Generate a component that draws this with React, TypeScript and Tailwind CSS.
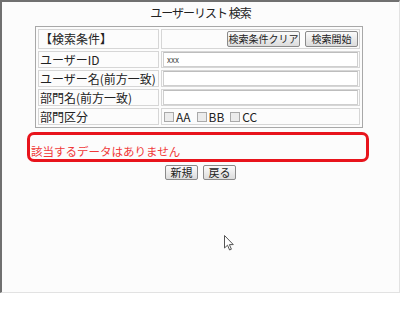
import React from "react";

const jp = { fontFamily: '"Noto Sans CJK JP", "Liberation Sans", sans-serif' };

function OldButton({ label, className }: { label: string; className: string }) {
  return (
    <button
      type="button"
      className={`flex items-center justify-center rounded-[2px] border border-[#8a8a8a] bg-gradient-to-b from-[#fbfbfb] to-[#dcdcdc] leading-none text-[#222] ${className}`}
    >
      {label}
    </button>
  );
}

function TextBox({ value }: { value?: string }) {
  return (
    <div className="flex h-[15px] w-full items-center border border-[#cfcfcf] border-t-[#bdbdbd] bg-white pl-[3px] text-[8px] leading-none text-[#444]">
      {value}
    </div>
  );
}

function Check({ label }: { label: string }) {
  return (
    <span className="flex items-center gap-[2px]">
      <span className="h-[10px] w-[10px] border border-[#a9a9a9] bg-[#ececec]" />
      <span className="text-[12px] leading-none text-[#222]">{label}</span>
    </span>
  );
}

const rows = [
  { label: "ユーザーID", value: "xxx" },
  { label: "ユーザー名(前方一致)", value: "" },
  { label: "部門名(前方一致)", value: "" },
];

export default function App() {
  return (
    <div className="h-[319px] w-[400px] bg-white" style={jp}>
      <div className="relative h-[293px] w-[400px] border-l-2 border-t-2 border-b border-r border-l-[#707070] border-t-[#707070] border-b-[#e2e2e2] border-r-[#e2e2e2] bg-[#fcfcfc]">
        <div className="h-[24px] pt-[4px] text-center text-[12px] leading-[14px] tracking-[-1px] text-[#222]">
          ユーザーリスト 検索
        </div>

        <table className="ml-[33px] w-[328px] table-fixed border-separate border-spacing-[2px] border border-[#a8a8a8] text-[12px] leading-none text-[#222]">
          <colgroup>
            <col className="w-[121px]" />
            <col />
          </colgroup>
          <tbody>
            <tr>
              <td className="h-[20px] border border-[#d6d6d6] px-[1px] align-middle">【検索条件】</td>
              <td className="h-[20px] border border-[#d6d6d6] p-0 align-middle">
                <div className="flex justify-end gap-[5px] pr-[1px]">
                  <OldButton label="検索条件クリア" className="h-[16px] w-[73px] text-[10px]" />
                  <OldButton label="検索開始" className="h-[16px] w-[53px] text-[10px]" />
                </div>
              </td>
            </tr>
            {rows.map((row) => (
              <tr key={row.label}>
                <td className="h-[17px] border border-[#d6d6d6] px-[1px] align-middle">{row.label}</td>
                <td className="h-[17px] border border-[#d6d6d6] px-[1px] py-0 align-middle">
                  <TextBox value={row.value} />
                </td>
              </tr>
            ))}
            <tr>
              <td className="h-[17px] border border-[#d6d6d6] px-[1px] align-middle">部門区分</td>
              <td className="h-[17px] border border-[#d6d6d6] px-[2px] align-middle">
                <div className="flex items-center gap-[6px]">
                  <Check label="AA" />
                  <Check label="BB" />
                  <Check label="CC" />
                </div>
              </td>
            </tr>
          </tbody>
        </table>

        <div className="ml-[25px] mt-[4px] h-[30px] w-[342px] rounded-[7px] border-[3px] border-[#e8141c] pl-[1px] pt-[11px] text-[11.5px] leading-none text-[#f03838]">
          該当するデータはありません
        </div>

        <div className="mt-[3px] flex justify-center gap-[5px]">
          <OldButton label="新規" className="h-[15px] w-[33px] text-[11px]" />
          <OldButton label="戻る" className="h-[15px] w-[33px] text-[11px]" />
        </div>

        <svg className="absolute left-[222px] top-[233px]" width="12" height="18" viewBox="0 0 12 18">
          <path d="M0.5 0.5 L0.5 13 L3.5 10.2 L5.6 15 L7.4 14.2 L5.4 9.6 L9.3 9.6 Z" fill="#fff" stroke="#555" strokeWidth="1" />
        </svg>
      </div>
    </div>
  );
}
